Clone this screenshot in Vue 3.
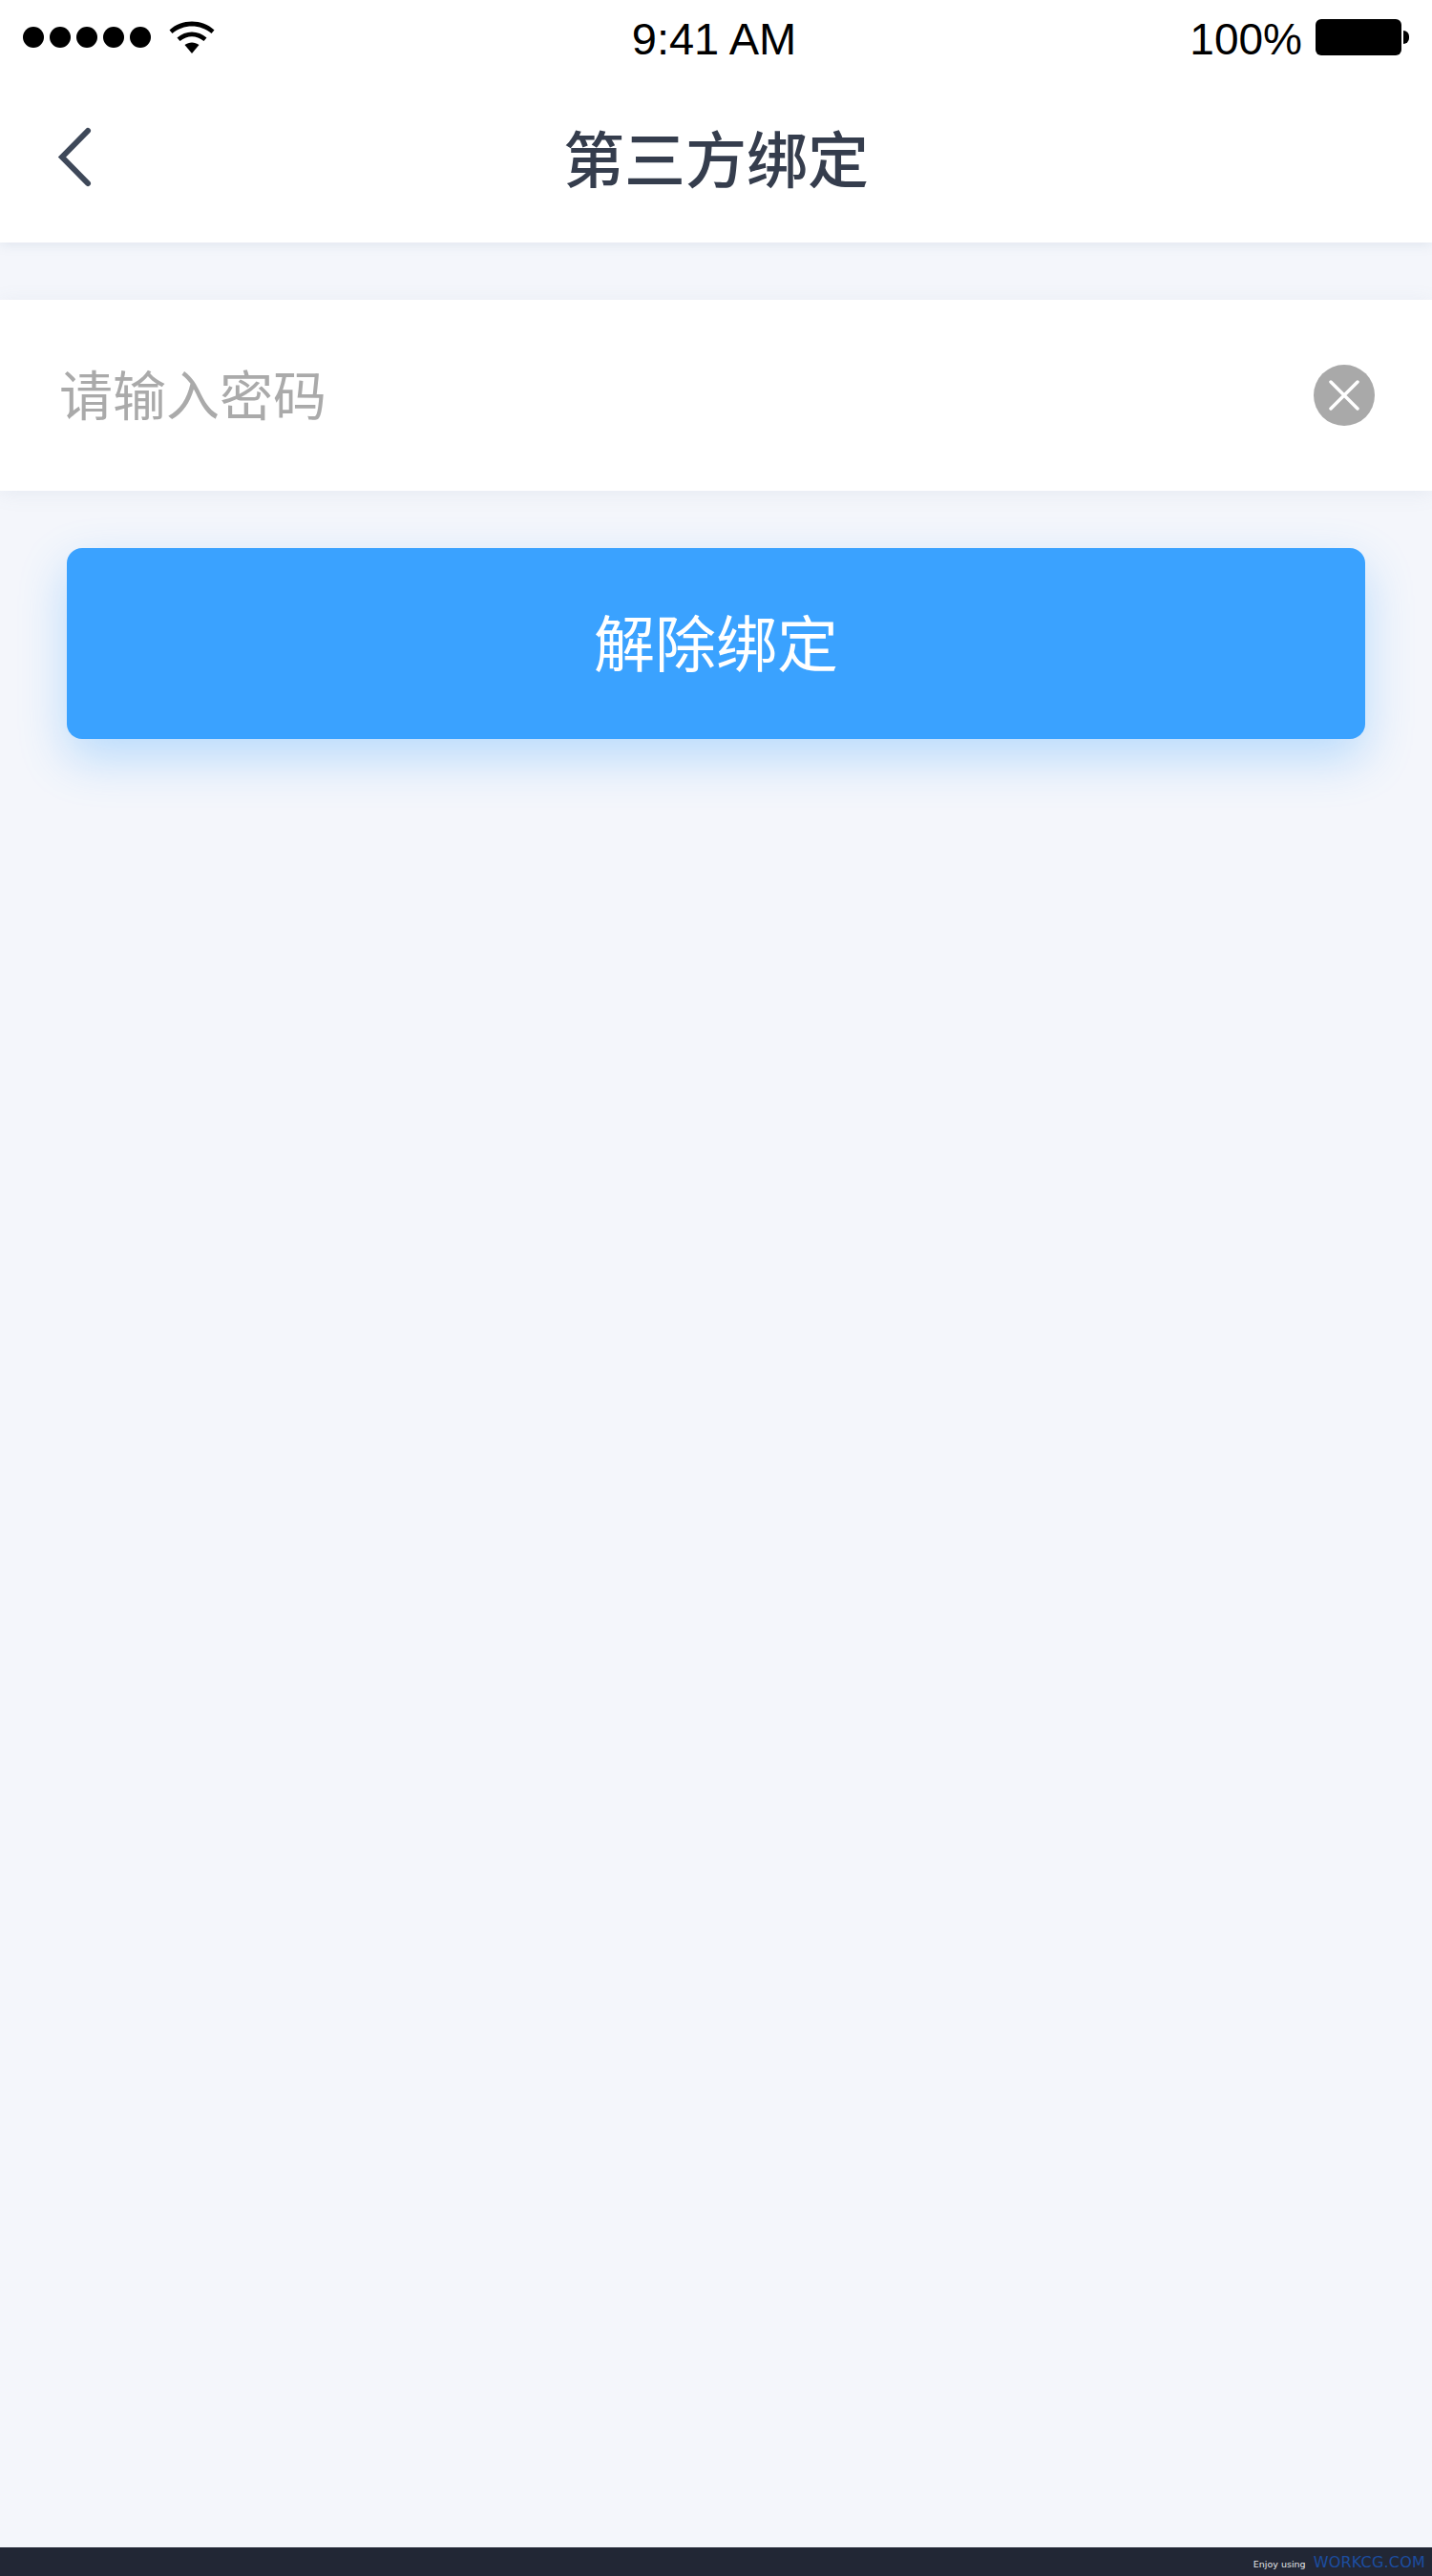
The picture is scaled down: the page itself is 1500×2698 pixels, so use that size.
<script setup>
const signalDots = [1, 2, 3, 4, 5]
</script>

<template>
  <div class="page">
    <header class="top">
      <div class="status-bar">
        <div class="status-left">
          <div class="signal">
            <span v-for="dot in signalDots" :key="dot" class="dot"></span>
          </div>
          <svg class="wifi" width="48" height="36" viewBox="0 0 48 36">
            <path d="M0.5 10.5C13 -1.5 35 -1.5 47.5 10.5L44.5 14C33 4 15 4 3.5 14Z" fill="#000" />
            <path d="M8.5 18.5C17.5 10.5 30.5 10.5 39.5 18.5L36.5 22C28.5 15.5 19.5 15.5 11.5 22Z" fill="#000" />
            <path d="M16.5 26C21 22.5 27 22.5 31.5 26L24 35Z" fill="#000" />
          </svg>
        </div>
        <div class="time">9:41 AM</div>
        <div class="status-right">
          <span class="percent">100%</span>
          <div class="battery"></div>
          <div class="battery-tip"></div>
        </div>
      </div>
      <nav class="nav">
        <button class="back" type="button" aria-label="返回">
          <svg width="38" height="66" viewBox="0 0 38 66">
            <path d="M33 5L6 32.5L33 60" fill="none" stroke="#3e4859" stroke-width="6" stroke-linecap="round" stroke-linejoin="miter" />
          </svg>
        </button>
        <h1 class="title">第三方绑定</h1>
      </nav>
    </header>

    <main class="content">
      <div class="field">
        <span class="placeholder">请输入密码</span>
        <button class="clear" type="button" aria-label="清除">
          <svg width="32" height="32" viewBox="0 0 32 32">
            <path d="M2 2L30 30M30 2L2 30" stroke="#fff" stroke-width="3.5" stroke-linecap="round" />
          </svg>
        </button>
      </div>
      <button class="submit" type="button">解除绑定</button>
    </main>

    <footer class="footer">
      <span class="enjoy">Enjoy using</span>
      <span class="brand">WORKCG.COM</span>
    </footer>
  </div>
</template>

<style>
html,
body {
  margin: 0;
  background: #f4f6fb;
}
</style>

<style scoped>
.page {
  display: flex;
  flex-direction: column;
  height: 2698px;
  background: #f4f6fb;
  font-family: "Noto Sans CJK SC", "Liberation Sans", sans-serif;
}

.top {
  height: 254px;
  flex-shrink: 0;
  background: #fff;
  box-shadow: 0 2px 12px rgba(120, 140, 170, 0.16);
  position: relative;
  z-index: 2;
}

.status-bar {
  height: 78px;
  padding: 0 24px;
  display: grid;
  grid-template-columns: 1fr auto 1fr;
  grid-template-rows: 78px;
  align-items: center;
  font-family: "Liberation Sans", sans-serif;
  color: #000;
}

.status-left {
  display: flex;
  align-items: center;
  gap: 19px;
}

.signal {
  display: flex;
  gap: 6px;
}

.dot {
  width: 22px;
  height: 22px;
  border-radius: 50%;
  background: #000;
}

.time {
  height: 78px;
  font-size: 47px;
  line-height: 82px;
  margin-right: 4px;
}

.status-right {
  display: flex;
  align-items: center;
  justify-content: flex-end;
}

.percent {
  height: 78px;
  font-size: 46px;
  line-height: 82px;
  margin-right: 14px;
}

.battery {
  width: 90px;
  height: 38px;
  border-radius: 6px;
  background: #000;
}

.battery-tip {
  width: 6px;
  height: 14px;
  margin-left: 2px;
  border-radius: 0 6px 6px 0;
  background: #000;
}

.nav {
  height: 176px;
  display: flex;
  align-items: center;
  justify-content: center;
  position: relative;
}

.back {
  position: absolute;
  left: 59px;
  top: 54px;
  width: 38px;
  height: 66px;
  padding: 0;
  border: none;
  background: none;
}

.back svg {
  display: block;
}

.title {
  margin: 0 0 6px;
  font-size: 64px;
  font-weight: 500;
  line-height: 90px;
  color: #353d4d;
}

.content {
  flex: 1;
  padding-top: 60px;
}

.field {
  height: 200px;
  padding: 0 60px 0 62px;
  display: flex;
  align-items: center;
  justify-content: space-between;
  background: #fff;
  box-shadow: 0 3px 20px rgba(120, 140, 170, 0.1);
}

.placeholder {
  margin-bottom: 7px;
  font-size: 56px;
  font-weight: 400;
  color: #aaa;
}

.clear {
  width: 64px;
  height: 64px;
  padding: 0;
  border: none;
  border-radius: 50%;
  background: #a9a9a9;
  display: flex;
  align-items: center;
  justify-content: center;
}

.submit {
  display: block;
  width: 1360px;
  height: 200px;
  margin: 60px 70px 0;
  padding: 0 0 9px;
  border: none;
  border-radius: 16px;
  background: #3aa2ff;
  box-shadow: 0 20px 50px rgba(58, 162, 255, 0.32);
  color: #fff;
  font-family: inherit;
  font-size: 64px;
  font-weight: 400;
}

.footer {
  height: 30px;
  flex-shrink: 0;
  padding-right: 7px;
  display: flex;
  align-items: center;
  justify-content: flex-end;
  background: #222735;
  font-family: "DejaVu Sans", sans-serif;
}

.enjoy {
  font-size: 9.5px;
  color: #e4e6ea;
  margin-right: 8px;
  padding-top: 5px;
}

.brand {
  font-size: 16px;
  letter-spacing: 0.2px;
  color: #1c4da0;
}
</style>
